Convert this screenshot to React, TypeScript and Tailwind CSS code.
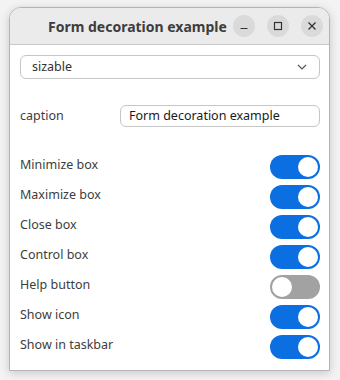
import { useState } from "react";

const options = [
  { label: "Minimize box", on: true },
  { label: "Maximize box", on: true },
  { label: "Close box", on: true },
  { label: "Control box", on: true },
  { label: "Help button", on: false },
  { label: "Show icon", on: true },
  { label: "Show in taskbar", on: true },
];

function Toggle({ on }: { on: boolean }) {
  return (
    <div
      className={
        on
          ? "w-[50px] h-[24px] rounded-full bg-[#0b6fe2] flex items-center justify-end px-[2px]"
          : "w-[50px] h-[24px] rounded-full bg-[#a2a2a2] flex items-center justify-start px-[2px]"
      }
    >
      <div className="w-[20px] h-[20px] rounded-full bg-white" />
    </div>
  );
}

export default function App() {
  const [caption] = useState("Form decoration example");

  return (
    <div
      className="w-[340px] h-[380px] bg-[#f3f3f3] pt-[7px] pl-[9px] overflow-hidden"
      style={{ fontFamily: '"Noto Sans", "Open Sans", sans-serif' }}
    >
      <div className="w-[321px] h-[364px] bg-white border border-[#b4b4b4] rounded-t-[12px] shadow-[0_2px_10px_rgba(0,0,0,0.18)] flex flex-col overflow-hidden">
        {/* Title bar */}
        <div className="h-[37px] bg-[#ebebeb] border-b border-[#c8c8c8] flex items-center pl-[38px] pr-[6px]">
          <span className="text-[14px] font-bold text-[#3d3d3d] whitespace-nowrap">Form decoration example</span>
          <div className="flex-1" />
          <div className="flex gap-[12px] shrink-0">
            <div className="w-[22px] h-[22px] rounded-full bg-[#dadada] flex items-center justify-center">
              <svg width="10" height="10" viewBox="0 0 10 10">
                <path d="M1.5 7.5h7" stroke="#333" strokeWidth="1.2" />
              </svg>
            </div>
            <div className="w-[22px] h-[22px] rounded-full bg-[#dadada] flex items-center justify-center">
              <svg width="10" height="10" viewBox="0 0 10 10">
                <rect x="1.5" y="1.5" width="7" height="7" fill="none" stroke="#333" strokeWidth="1.2" />
              </svg>
            </div>
            <div className="w-[22px] h-[22px] rounded-full bg-[#dadada] flex items-center justify-center">
              <svg width="10" height="10" viewBox="0 0 10 10">
                <path d="M1.5 1.5l7 7M8.5 1.5l-7 7" stroke="#333" strokeWidth="1.3" />
              </svg>
            </div>
          </div>
        </div>

        {/* Content */}
        <div className="flex flex-col pl-[10px] pr-[9px] pt-[10px]">
          <div className="h-[24px] border border-[#c6c6c6] rounded-[6px] flex items-center pl-[11px] pr-[12px]">
            <span className="text-[12.5px] text-[#333] flex-1">sizable</span>
            <svg width="10" height="6" viewBox="0 0 10 6">
              <path d="M1 1l4 4 4-4" fill="none" stroke="#555" strokeWidth="1.2" />
            </svg>
          </div>

          <div className="mt-[26px] flex items-center">
            <span className="w-[100px] text-[12.5px] text-[#3d3d3d]">caption</span>
            <div className="flex-1 h-[22px] border border-[#c6c6c6] rounded-[6px] flex items-center pl-[8px]">
              <span className="text-[12.5px] text-[#1a1a1a]">{caption}</span>
            </div>
          </div>

          <div className="mt-[28px] flex flex-col gap-[6px]">
            {options.map(({ label, on }) => (
              <div key={label} className="h-[24px] flex items-center">
                <span className="flex-1 text-[12.5px] text-[#3d3d3d] -mt-[3px]">{label}</span>
                <Toggle on={on} />
              </div>
            ))}
          </div>
        </div>
      </div>
    </div>
  );
}
